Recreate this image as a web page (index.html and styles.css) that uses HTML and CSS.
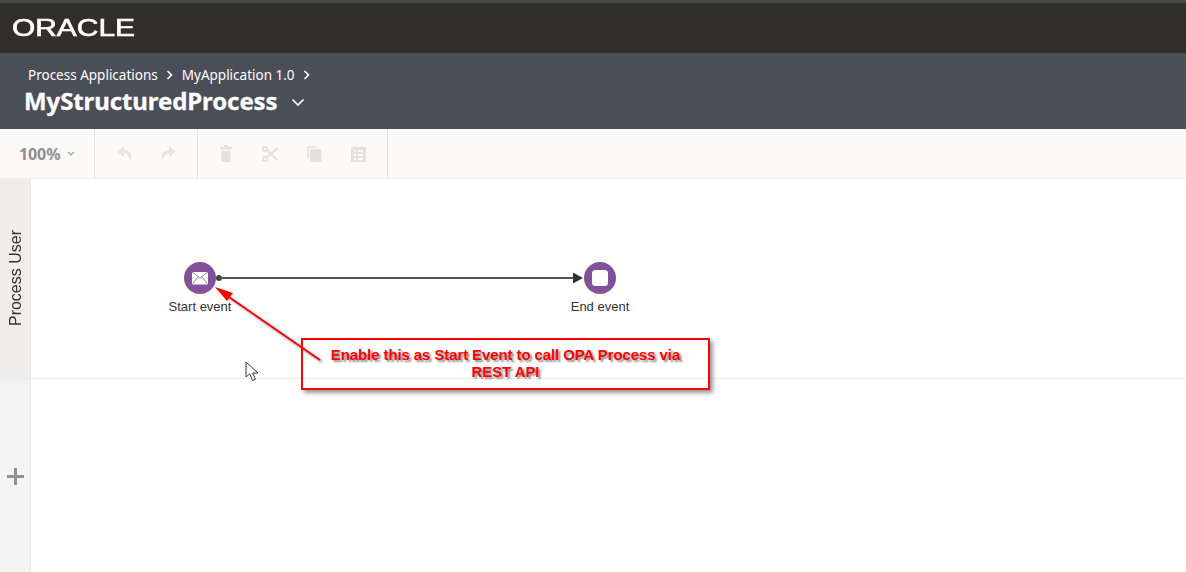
FILE: index.html
```html
<!DOCTYPE html>
<html lang="en">
<head>
<meta charset="utf-8">
<title>MyStructuredProcess</title>
<link rel="stylesheet" href="styles.css">
</head>
<body>
<div class="page">
  <header class="brandbar"><span class="logo">ORACLE</span></header>
  <section class="titlebar">
    <nav class="crumbs">
      <span>Process Applications</span>
      <svg class="crumb-sep" width="8" height="10" viewBox="0 0 8 10"><path d="M1.5 1l4 4-4 4" fill="none" stroke="#fff" stroke-width="1.6"/></svg>
      <span>MyApplication 1.0</span>
      <svg class="crumb-sep" width="8" height="10" viewBox="0 0 8 10"><path d="M1.5 1l4 4-4 4" fill="none" stroke="#fff" stroke-width="1.6"/></svg>
    </nav>
    <div class="title-row">
      <h1 class="title">MyStructuredProcess</h1>
      <svg class="title-caret" width="14" height="9" viewBox="0 0 14 9"><path d="M1.5 1.5L7 7l5.5-5.5" fill="none" stroke="#fff" stroke-width="1.7"/></svg>
    </div>
  </section>
  <section class="toolbar">
    <div class="tool-group zoom-group">
      <span class="zoom-value">100%</span>
      <svg width="8" height="5" viewBox="0 0 8 5"><path d="M1 1l3 3 3-3" fill="none" stroke="#9a9a9a" stroke-width="1.1"/></svg>
    </div>
    <div class="tool-group history-group">
      <svg width="16" height="15" viewBox="0 0 16 15"><path d="M7 0L0 5.500 7 11V7.500c3.500 0 5.800 2 6.500 7.500 2.500-6.500-.5-10.800-6.500-11.500z" fill="#e6e5e4"/></svg>
      <svg width="16" height="15" viewBox="0 0 16 15"><path d="M9 0l7 5.500L9 11V7.500c-3.500 0-5.800 2-6.500 7.500C0 8.500 3 4.200 9 3.500z" fill="#e6e5e4"/></svg>
    </div>
    <div class="tool-group edit-group">
      <svg width="14" height="17" viewBox="0 0 14 17"><path d="M5 0h4v2h4v2.500H1V2h4zM2.500 6h9v11h-9z" fill="#e2e1e0"/></svg>
      <svg width="16" height="16" viewBox="0 0 16 16"><g fill="none" stroke="#e2e1e0" stroke-width="2"><circle cx="3" cy="3" r="2.200"/><circle cx="3" cy="13" r="2.200"/><path d="M4.800 4.500L15.500 14M4.800 11.500L15.500 2"/></g></svg>
      <svg width="15" height="16" viewBox="0 0 15 16"><path d="M0 0h9v2H2v11H0z" fill="#e8e7e6"/><path d="M3 3h11.500v13H3z" fill="#e2e1e0"/></svg>
      <svg width="15" height="16" viewBox="0 0 15 16"><path d="M0 1h3V0h2v1h5V0h2v1h3v15H0z" fill="#e2e1e0"/><path d="M3 4h2v2H3zM7 4h5v2H7zM3 8h2v2H3zM7 8h5v2H7zM3 12h2v2H3zM7 12h5v2H7z" fill="#fbfaf9"/></svg>
    </div>
  </section>
  <main class="canvas">
    <div class="lane lane-user">
      <div class="lane-head"><span class="lane-label">Process User</span></div>
      <div class="lane-body"></div>
    </div>
    <div class="lane lane-add">
      <div class="lane-head"><span class="lane-plus"></span></div>
      <div class="lane-body"></div>
    </div>

    <svg class="flow" width="1186" height="394" viewBox="0 0 1186 394">
      <defs>
        <filter id="blur" x="-20%" y="-20%" width="140%" height="140%"><feGaussianBlur stdDeviation="1.200"/></filter>
      </defs>
      <circle cx="219" cy="100" r="3" fill="#3d3d3d"/>
      <path d="M219 100H576" stroke="#555" stroke-width="2"/>
      <path d="M573 94.500L583 100l-10 5.500z" fill="#333"/>
      <circle cx="200" cy="100" r="16" fill="#83509a"/>
      <path d="M192 94h16v12.500h-16z" fill="#fff"/>
      <path d="M192 94l8 6 8-6M192 106.500l6-7.500M208 106.500l-6-7.500" fill="none" stroke="#83509a" stroke-width=".8"/>
      <circle cx="600" cy="100" r="16" fill="#83509a"/>
      <rect x="592" y="92" width="16" height="16" rx="3.500" fill="#fff"/>
      <path d="M320 182L225 116" stroke="#888" stroke-width="2" filter="url(#blur)" transform="translate(2 2)"/>
      <path d="M320 182L226 117" stroke="#f00" stroke-width="1.800"/>
      <path d="M215 109l18 6-6 8z" fill="#f00"/>
    </svg>

    <div class="node-label start-label">Start event</div>
    <div class="node-label end-label">End event</div>
    <div class="callout">Enable this as Start Event to call OPA Process via REST API</div>
    <svg class="cursor" width="15" height="21" viewBox="0 0 15 21"><path d="M1 1v15l3.800-3.200 2.700 6.700 3-1.200-2.800-6.300H13z" fill="#fff" stroke="#333" stroke-width="1"/></svg>
  </main>
</div>
</body>
</html>
```
FILE: styles.css
```css
* { box-sizing: border-box; }
html, body { margin: 0; height: 100%; }
body { background: #fff; font-family: "Liberation Sans", Arial, sans-serif; overflow: hidden; }
.page { width: 1186px; height: 572px; display: flex; flex-direction: column; }

.brandbar {
  height: 53px; flex: none; background: #322e2b;
  border-top: 3px solid #4a4c4a;
  display: flex; align-items: center; padding-left: 12px;
}
.logo {
  font-family: "Liberation Sans", sans-serif; font-size: 23px; color: #fff;
  transform: scaleX(1.3); transform-origin: left center;
  -webkit-text-stroke: .6px #fff;
}

.titlebar { height: 76px; flex: none; background: #4a4e57; padding: 12px 0 0 24px; color: #fff; }
.crumbs {
  display: flex; align-items: center; padding-left: 4px;
  font-family: "Noto Sans", sans-serif; font-size: 13.500px; line-height: 20px; letter-spacing: 0;
}
.crumb-sep { margin: 0 8px; }
.title-row { display: flex; align-items: center; margin-top: 1px; }
.title { margin: 0; font-family: "Noto Sans", sans-serif; font-weight: 700; font-size: 24px; line-height: 30px; letter-spacing: -.1px; -webkit-text-stroke: .3px #fff; }
.title-caret { margin-left: 13px; margin-top: 3px; }

.toolbar { height: 49px; flex: none; background: #fbfaf9; display: flex; }
.tool-group { display: flex; align-items: center; border-right: 1px solid #e4e3e2; height: 49px; }
.zoom-group { width: 95px; padding-left: 19px; gap: 6px; }
.zoom-value { font-family: "Noto Sans", sans-serif; font-weight: 700; font-size: 16px; color: #8f8f8f; letter-spacing: -.1px; }
.history-group { width: 103px; padding-left: 22px; gap: 27px; }
.edit-group { width: 190px; padding-left: 21px; gap: 29px; }

.canvas { position: relative; flex: 1; background: #fff; border-top: 1px solid #f0efee; }
.lane { display: flex; }
.lane-user { height: 200px; border-bottom: 1px solid #ececec; }
.lane-add { height: 193px; }
.lane-head {
  width: 31px; flex: none; border-right: 1px solid #e8e7e6;
  display: flex; align-items: center; justify-content: center;
}
.lane-user .lane-head { background: #f0eeec; }
.lane-add .lane-head { background: #f3f3f3; }
.lane-body { flex: 1; }
.lane-label {
  writing-mode: vertical-rl; transform: rotate(180deg);
  font-size: 16px; color: #333; margin-bottom: 1px; margin-left: 2px;
}
.lane-plus { position: relative; width: 17px; height: 17px; margin-top: 1px; display: block;
  background: linear-gradient(#8e9194,#8e9194) center/17px 3px no-repeat, linear-gradient(#8e9194,#8e9194) center/3px 17px no-repeat; }

.flow { position: absolute; left: 0; top: -1px; }
.node-label { position: absolute; top: 120px; width: 100px; text-align: center; font-size: 13px; line-height: 16px; color: #333; }
.start-label { left: 150px; }
.end-label { left: 550px; }
.callout {
  position: absolute; left: 301px; top: 159px; width: 409px; height: 52px;
  border: 2px solid #f00; box-shadow: 3px 3px 4px #9a9a9a; background: transparent;
  padding: 6px 20px 0; text-align: center;
  font-size: 15px; line-height: 17px; font-weight: 700; color: #f00; text-shadow: 2px 2px 2px #8a8a8a;
  letter-spacing: -.1px;
}
.cursor { position: absolute; left: 245px; top: 182px; }
```
